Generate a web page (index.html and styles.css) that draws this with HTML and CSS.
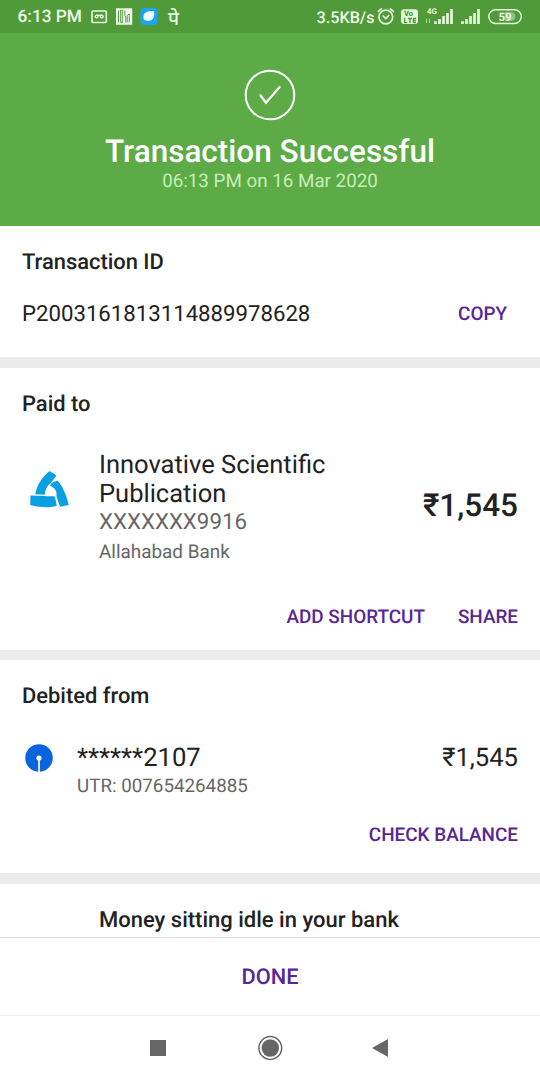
FILE: index.html
```html
<!DOCTYPE html>
<html lang="en">
<head>
<meta charset="utf-8">
<title>Transaction Successful</title>
<link rel="stylesheet" href="styles.css">
</head>
<body>
<div class="screen">
  <header class="status">
    <span class="clock">6:13 PM</span>
    <svg class="notif" width="80" height="33" viewBox="0 0 80 33">
      <rect x="2" y="11" width="14.300" height="11.500" rx="1" fill="none" stroke="#eafbe2" stroke-width="1.600"/>
      <path d="M6.500 15.300h5.500" stroke="#eafbe2" stroke-width="1.300"/>
      <circle cx="6.600" cy="16.500" r="1.400" fill="none" stroke="#eafbe2" stroke-width="1.400"/>
      <circle cx="11.800" cy="16.500" r="1.400" fill="none" stroke="#eafbe2" stroke-width="1.400"/>
      <rect x="26" y="8.300" width="16.200" height="16.400" fill="#f3fff0"/>
      <path d="M28.500 10.500v12" stroke="#5b994a" stroke-width="1.200"/>
      <path d="M30.500 10.300h2.200v12.200h-2.200z" fill="#bcdab2" stroke="#5b994a" stroke-width=".8"/>
      <path d="M34.800 10.500v5l1 1.500v5.500M37.200 22.500v-7l2-1.500v8.500" stroke="#5b994a" stroke-width="1" fill="none"/>
      <rect x="50.500" y="8" width="17" height="17" rx="4" fill="#18a5f5"/>
      <path d="M53.500 17c0-4 3-6.500 10.500-6 1 6-1 10-6 10-1 0-2-.3-2.500-.7-1.500.2-2-1-2-3.300z" fill="#eefbff"/>
    </svg>
    <span class="pe">पे</span>
    <span class="speed">3.5KB/s</span>
    <svg class="signals" width="147" height="33" viewBox="0 0 147 33">
      <g fill="none" stroke="#e4f8db" stroke-width="1.600">
        <circle cx="8.800" cy="17" r="6.900"/>
        <path d="M5.700 15.500l3 3 3.500-3.500M.800 11.800l4-3.500M12.800 8.300l4 3.500"/>
      </g>
      <rect x="24" y="9.300" width="17" height="14.700" rx="3" fill="#e4f8db"/>
      <text x="27" y="16.200" class="volte">Vo</text>
      <path d="M27.700 17.800v4.800h2.500M31 18.500h4M33 18.500v4.700M39 18.500h-2.600v4h2.600M36.500 20.500h2.300" fill="none" stroke="#519a39" stroke-width="1.300"/>
      <text x="50" y="13.900" class="gen">4G</text>
      <path d="M49.500 23v-4.500M52.500 18.500V23" stroke="#a9d49a" stroke-width="1"/>
      <path d="M58.500 24v-2.700M62.500 24v-5M66.500 24v-8M70.500 24v-11M74.500 24V9M85.500 24v-2.700M89.500 24v-5M93.500 24v-8M97.500 24v-11M101.500 24V9" stroke="#e4f8db" stroke-width="2.700"/>
      <path d="M128 12h6a4.500 4.500 0 0 1 0 9H128z" fill="#8bc47c"/>
      <rect x="111.800" y="9.700" width="32.500" height="13.700" rx="6.800" fill="none" stroke="#e4f8db" stroke-width="1.500"/>
      <text x="121.500" y="20.700" class="battery">59</text>
    </svg>
  </header>
  <section class="hero">
    <svg width="54" height="54" viewBox="0 0 54 54" fill="none" stroke="#fff">
      <circle cx="27" cy="27" r="24.300" stroke-width="2"/>
      <path d="M17.500 27.500l5.500 7.200 13.500-15.500" stroke-width="2.300" stroke-linecap="round"/>
    </svg>
    <h1>Transaction Successful</h1>
    <p class="when">06:13 PM on 16 Mar 2020</p>
  </section>
  <section class="card txn">
    <h2>Transaction ID</h2>
    <div class="row id-row"><span class="txn-id">P2003161813114889978628</span><a class="action">COPY</a></div>
  </section>
  <section class="card paid">
    <h2>Paid to</h2>
    <div class="row payee">
      <svg class="bank" width="40" height="38" viewBox="0 0 40 38" fill="#08a0e3">
        <path d="M19.500 0l7 4.500-6.500 8.500c-2.500 1.500-4 3.500-5.200 10.800L5.300 23.300C6.500 15 12 6 19.500 0z"/>
        <path d="M.500 24.400l14.500.6c4 1 7.500-.5 10 .8l1.800 9c-8 2.500-17.300 1.500-26.600-.8z"/>
        <path d="M19.800 14.200l2.200-2.400 5.500-2.300c5.500 6 9 15 11.300 24.500l-8.800 1.800-3.500-10.300c.5-3-.2-7-3.500-9z"/>
        <circle cx="19.700" cy="20.700" r="4.100" fill="#fff"/>
      </svg>
      <div class="who">
        <div class="name">Innovative Scientific<br>Publication</div>
        <div class="acct">XXXXXXX9916</div>
        <div class="bank-name">Allahabad Bank</div>
      </div>
      <strong class="total">₹1,545</strong>
    </div>
    <div class="actions"><a class="action">ADD SHORTCUT</a><a class="action">SHARE</a></div>
  </section>
  <section class="card debit">
    <h2>Debited from</h2>
    <div class="row source">
      <svg class="sbi" width="28" height="28" viewBox="0 0 28 28">
        <circle cx="14" cy="14" r="13.800" fill="#0864df"/>
        <circle cx="14" cy="14" r="2.600" fill="#fff"/>
        <path d="M14 14v14" stroke="#fff" stroke-width="1.700"/>
      </svg>
      <div class="from">
        <div class="masked">******2107</div>
        <div class="utr">UTR: 007654264885</div>
      </div>
      <span class="sum">₹1,545</span>
    </div>
    <div class="actions"><a class="action">CHECK BALANCE</a></div>
  </section>
  <section class="promo">Money sitting idle in your bank</section>
  <div class="done">DONE</div>
  <nav class="nav">
    <svg width="240" height="26" viewBox="0 0 240 26" fill="#666">
      <rect x="0" y="5" width="16" height="16"/>
      <circle cx="120.300" cy="13" r="11.400" fill="none" stroke="#666" stroke-width="1.500"/>
      <circle cx="120.300" cy="13" r="8.700"/>
      <path d="M222 13l16-9v18z"/>
    </svg>
  </nav>
</div>
</body>
</html>
```
FILE: styles.css
```css
* { box-sizing: border-box; margin: 0; padding: 0; }
body { width: 540px; font-family: Roboto, "Noto Sans", sans-serif; text-rendering: geometricPrecision; background: #fff; color: #222; }
.screen { display: flex; flex-direction: column; width: 540px; height: 1080px; overflow: hidden; white-space: nowrap; }
.status { display: flex; flex: none; height: 33px; line-height: 35px; background: #519a39; color: #effde9; }
.clock { width: 72px; margin-left: 17.5px; font-size: 17.3px; font-weight: 500; }
.notif { flex: none; }
.pe { width: 20px; margin-left: -1.5px; font-size: 19px; font-weight: 500; line-height: 37px; }
.speed { width: 60px; margin-left: 128.500px; font-size: 16.2px; font-weight: 500; }
.signals { flex: none; }
.volte { font-size: 7.5px; font-weight: 900; fill: #519a39; }
.gen { font-size: 8px; font-weight: 700; fill: #e4f8db; }
.battery { font-size: 11.5px; font-weight: 700; fill: #effde9; }
.hero { display: flex; flex: none; flex-direction: column; align-items: center; height: 193px; padding-top: 35px; background: #5dab46; }
h1 { margin-top: 9px; font-size: 31.5px; font-weight: 500; line-height: 42px; color: #fff; }
.when { font-size: 18.8px; line-height: 17px; color: #c6efb8; }
.card { flex: none; border-bottom: 11px solid #ececec; }
h2 { padding-left: 22px; font-size: 21.9px; font-weight: 500; line-height: 30px; }
.row { display: flex; }
.txn { height: 142px; padding-top: 22px; }
.id-row { justify-content: space-between; padding: 21px 33px 0 22px; line-height: 30px; }
.txn-id { font-size: 22.2px; }
.action { font-size: 18.9px; font-weight: 500; color: #572795; }
.paid { height: 292px; padding-top: 22px; border-bottom-width: 10px; }
.payee { padding: 31px 22px 0 30px; }
.bank { margin-top: 20px; }
.who { flex: 1; margin-left: 29px; }
.name { font-size: 25.5px; line-height: 29px; }
.acct { font-size: 22.3px; line-height: 27px; color: #666; }
.bank-name { font-size: 18.9px; line-height: 31px; color: #666; }
.total { margin-top: 34px; font-size: 31.5px; font-weight: 500; line-height: 42px; }
.actions { display: flex; justify-content: flex-end; gap: 33px; padding-right: 22px; line-height: 30px; }
.paid .actions { margin-top: 35px; }
.debit { height: 224px; padding-top: 22px; }
.source { padding: 31px 22px 0 24.5px; }
.sbi { margin-top: 1px; }
.from { flex: 1; margin-left: 24.5px; }
.masked { font-size: 25.6px; line-height: 30px; }
.utr { font-size: 18.8px; line-height: 26px; color: #666; }
.sum { font-size: 25.6px; line-height: 30px; }
.debit .actions { margin-top: 21px; }
.promo { flex: none; height: 52.5px; padding: 22px 0 0 99px; font-size: 22px; font-weight: 500; line-height: 30px; }
.done { flex: none; height: 79px; border-top: 1.5px solid #dcdcdc; border-bottom: 1px solid #efefef; text-align: center; font-size: 21.8px; font-weight: 500; line-height: 80px; color: #572795; }
.nav { padding: 19px 0 0 150px; }
```
